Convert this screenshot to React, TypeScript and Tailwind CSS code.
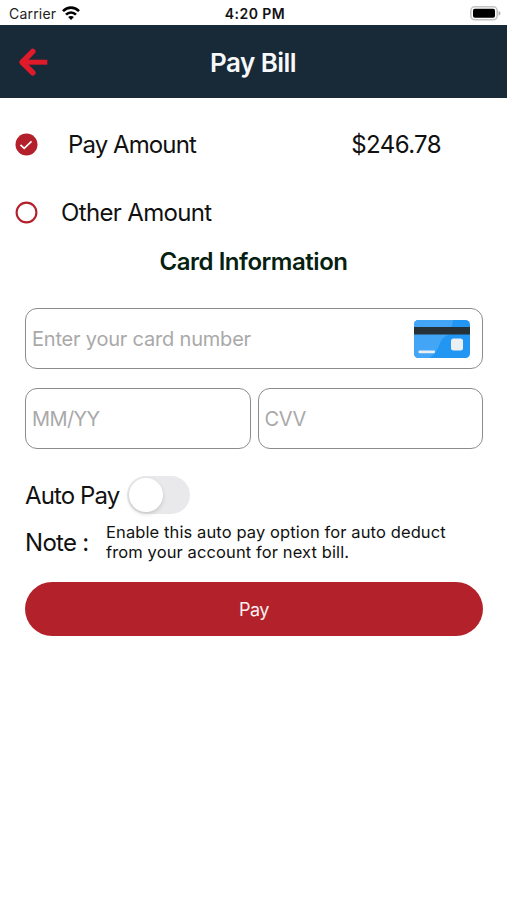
import { useState } from "react"

interface AmountOptionProps {
    label: string
    value?: string
    selected: boolean
    className: string
    onSelect: () => void
}

function StatusBar() {
    return (
        <div className="h-[25px] grid grid-cols-3 items-center pl-[9px] pr-1.5">
            <div className="flex items-center gap-1.5">
                <span className="text-[14px] leading-4 pt-0.5 tracking-[0.2px] text-[#222]">Carrier</span>
                <svg width="18" height="14" viewBox="0 0 18 14" className="mt-px" fill="none" stroke="#000" strokeWidth="2.6">
                    <path d="M1 5.2C5.6.4 12.4.4 17 5.2" />
                    <path d="M4 8.6c2.9-2.9 7.1-2.9 10 0" />
                    <path d="M9 14 6.1 11.100c1.500-1.500 4.300-1.500 5.800 0z" fill="#000" stroke="none" />
                </svg>
            </div>
            <span className="text-center text-[14px] leading-4 pt-0.5 font-semibold tracking-[0.45px] text-[#111]">4:20 PM</span>
            <svg width="31" height="15" viewBox="0 0 31 15" className="justify-self-end mt-px">
                <rect x="0.8" y="0.8" width="26.4" height="13" rx="4" fill="#fff" stroke="#c4c4c4" strokeWidth="1.6" />
                <rect x="3" y="2.8" width="22" height="9" rx="1.8" fill="#000" />
                <path d="M28.600 5c2.400.9 2.400 3.700 0 4.600z" fill="#aaa" />
            </svg>
        </div>
    )
}

function Header() {
    return (
        <header className="h-[73px] bg-[#182938] grid grid-cols-[1fr_auto_1fr] items-center pl-[19px] pr-5">
            <button aria-label="Back">
                <svg width="30" height="28" viewBox="0 0 30 28" fill="none" stroke="#df1b2b" strokeWidth="5.6" strokeLinejoin="round">
                    <path d="M13.800 3.400 3.200 14.200l10.600 10.600" strokeLinecap="round" />
                    <path d="M4 14.200h21.800" strokeWidth="5" strokeLinecap="square" />
                </svg>
            </button>
            <h1 className="pt-0.5 text-[26px] leading-8 font-semibold tracking-[-0.55px] text-[#f6f8fa]">Pay Bill</h1>
        </header>
    )
}

function AmountOption({ label, value, selected, className, onSelect }: AmountOptionProps) {
    return (
        <button onClick={onSelect} className={`w-full flex items-center pl-[15px] pr-[66px] ${className}`}>
            <svg width="23" height="23" viewBox="0 0 23 23" fill="none">
                {selected ? (
                    <>
                        <circle cx="11.5" cy="11.5" r="11" fill="#b3202c" />
                        <path d="m5.500 11.800 3.700 3.500 7.300-7" stroke="#fff" strokeWidth="1.6" />
                    </>
                ) : (
                    <circle cx="11.5" cy="11.5" r="9.9" stroke="#b3202c" strokeWidth="2.1" />
                )}
            </svg>
            <span className="pt-px text-[24px] leading-[30px]">{label}</span>
            {value && <span className="ml-auto pt-px text-[24px] leading-[30px] tracking-[-0.6px]">{value}</span>}
        </button>
    )
}

function CardIcon() {
    return (
        <svg width="56" height="38" viewBox="0 0 56 38" className="shrink-0">
            <rect width="56" height="38" rx="4.5" fill="#2196f3" />
            <path d="M4.500 0h34.800l-3.800 14.500C29 17 27 20 25.500 24.500 23.500 29.500 21 34 15.500 38h-11A4.500 4.500 0 0 1 0 33.500v-29A4.500 4.500 0 0 1 4.500 0z" fill="#42a5f5" />
            <path d="M0 7h56v7.500H0z" fill="#263238" />
            <rect x="37" y="18.500" width="12" height="12" rx="2.500" fill="#eceff1" />
            <rect x="4.500" y="30.500" width="16.500" height="2.800" rx="1" fill="#eceff1" />
        </svg>
    )
}

const field = "h-[61px] rounded-[12px] border border-[#8c8c8c] flex items-center pl-1.5 min-w-0"
const input = "w-full min-w-0 bg-transparent outline-none text-[20px] placeholder:text-[#a9a9a9]"

export default function App() {
    const [option, setOption] = useState("pay")
    const [autoPay, setAutoPay] = useState(false)

    return (
        <div className="w-full min-h-[900px] bg-white text-[#111] font-['Inter','Liberation_Sans',sans-serif]">
            <StatusBar />
            <Header />
            <main className="pt-[13px]">
                <AmountOption
                    label="Pay Amount"
                    value="$246.78"
                    selected={option === "pay"}
                    className="h-[67px] gap-[30px] tracking-[-0.9px]"
                    onSelect={() => setOption("pay")}
                />
                <AmountOption
                    label="Other Amount"
                    selected={option === "other"}
                    className="h-[68px] gap-[23px] tracking-[-0.65px]"
                    onSelect={() => setOption("other")}
                />
                <h2 className="pt-px text-center text-[24px] leading-[30px] font-semibold tracking-[-0.45px] text-[#071f10]">Card Information</h2>

                <div className="pl-[25px] pr-6 pt-[31px]">
                    <div className={`${field} pr-3`}>
                        <input className={`${input} tracking-[-0.2px]`} placeholder="Enter your card number" />
                        <CardIcon />
                    </div>
                    <div className="mt-[19px] grid grid-cols-2 gap-[7px]">
                        <div className={field}>
                            <input className={`${input} tracking-[-0.6px]`} placeholder="MM/YY" />
                        </div>
                        <div className={field}>
                            <input className={`${input} tracking-[-0.4px]`} placeholder="CVV" />
                        </div>
                    </div>

                    <div className="mt-[27px] h-[38px] flex items-center gap-[8px]">
                        <span className="pt-0.5 text-[24px] leading-[30px] tracking-[-0.9px]">Auto Pay</span>
                        <button
                            role="switch"
                            aria-checked={autoPay}
                            aria-label="Auto Pay"
                            onClick={() => setAutoPay(!autoPay)}
                            className={`w-[63px] h-[38px] rounded-full p-0.5 flex items-center ${autoPay ? "bg-[#b3202c] justify-end" : "bg-[#e9e9eb]"}`}
                        >
                            <span className="size-[34px] rounded-full bg-white shadow-[0_2px_4px_rgba(0,0,0,0.15)]" />
                        </button>
                    </div>

                    <div className="mt-2 h-10 flex items-center">
                        <span className="pt-0.5 w-[81px] shrink-0 text-[24px] leading-[30px] tracking-[-0.7px] whitespace-nowrap">Note :</span>
                        <p className="w-[360px] text-[16.5px] leading-5 tracking-[0.11px]">
                            Enable this auto pay option for auto deduct<br />from your account for next bill.
                        </p>
                    </div>

                    <button className="mt-5 w-full h-[54px] rounded-full bg-[#b3222b] text-[18px] tracking-[-0.5px] text-[#fbeeee]">Pay</button>
                </div>
            </main>
        </div>
    )
}
